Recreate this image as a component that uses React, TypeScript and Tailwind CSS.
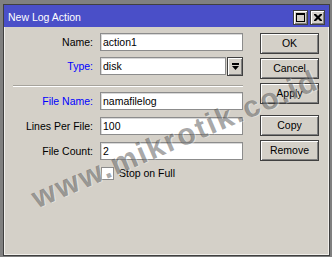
const raised = 'border border-[#404040] bg-[#d4d0c8] shadow-[inset_1px_1px_0_#ffffff,inset_-1px_-1px_0_#808080]'
const field = 'bg-white border border-[#8c8c8c] shadow-[inset_1px_1px_0_#d8d8d8] pl-[2px] flex items-center'

function Row({ label, value, blue }: { label: string; value: string; blue?: boolean }) {
  return (
    <div className="flex items-center h-[18px]">
      <div className={`w-[88px] text-right ${blue ? 'text-[#0000ff]' : 'text-black'}`}>{label}</div>
      <div className={`ml-[7px] w-[143px] h-[18px] ${field}`}>{value}</div>
    </div>
  )
}

function Btn({ label, className = '' }: { label: string; className?: string }) {
  return (
    <div className={`w-[59px] h-[21px] flex items-center justify-center ${raised} ${className}`}>{label}</div>
  )
}

export default function App() {
  return (
    <div className="relative w-[332px] h-[257px] overflow-hidden bg-[#808080] pt-[4px] pl-[3px] font-['Liberation_Sans',Arial,sans-serif] text-[10.5px] leading-none text-black">
      <div className="w-[327px] h-[252px] border border-[#404040] flex flex-col">
        {/* title bar */}
        <div className="h-[22px] bg-[#4a4fc8] flex items-center pl-[4px] pr-[4px]">
          <span className="text-white text-[10.5px] pt-[3px]">New Log Action</span>
          <div className="ml-auto flex gap-[2px] mt-[3px]">
            <div className={`w-[15px] h-[15px] flex items-center justify-center ${raised}`}>
              <svg width="9" height="9" viewBox="0 0 9 9">
                <rect x="0.5" y="0.5" width="8" height="8" fill="none" stroke="#000" />
                <rect x="0" y="0" width="9" height="2" fill="#000" />
              </svg>
            </div>
            <div className={`w-[15px] h-[15px] flex items-center justify-center ${raised}`}>
              <svg width="8" height="7" viewBox="0 0 8 7">
                <path d="M0 0h2l2 2 2-2h2v1L5.5 3.5 8 6v1H6L4 5 2 7H0V6l2.5-2.5L0 1z" fill="#000" />
              </svg>
            </div>
          </div>
        </div>

        {/* body */}
        <div className="flex-1 bg-[#d4d0c8] border border-t-0 border-[#f2f0ec] flex">
          <div className="flex flex-col pt-[6px]">
            <Row label="Name:" value="action1" />
            <div className="flex items-center h-[18px] mt-[6px]">
              <div className="w-[88px] text-right text-[#0000ff]">Type:</div>
              <div className={`ml-[7px] w-[126px] h-[18px] ${field}`}>disk</div>
              <div className={`ml-[1px] w-[16px] h-[19px] flex items-center justify-center ${raised} border-[#9a9a9a]`}>
                <svg width="7" height="7" viewBox="0 0 7 7">
                  <rect x="0" y="0" width="7" height="2" fill="#000" />
                  <path d="M0 3h7L3.5 7z" fill="#000" />
                </svg>
              </div>
            </div>
            <div className="ml-[8px] w-[230px] mt-[10px] border-t border-[#a6a39c] border-b border-b-white" />
            <div className="mt-[5px] flex flex-col gap-[7px]">
              <Row label="File Name:" value="namafilelog" blue />
              <Row label="Lines Per File:" value="100" />
              <Row label="File Count:" value="2" />
            </div>
            <div className="mt-[7px] flex items-center ml-[96px]">
              <div className="w-[13px] h-[13px] bg-white border border-[#8c8c8c]" />
              <span className="ml-[5px]">Stop on Full</span>
            </div>
          </div>

          <div className="ml-[17px] pt-[6px] flex flex-col">
            <Btn label="OK" />
            <Btn label="Cancel" className="mt-[4px]" />
            <Btn label="Apply" className="mt-[4px]" />
            <Btn label="Copy" className="mt-[11px]" />
            <Btn label="Remove" className="mt-[4px]" />
          </div>
        </div>
      </div>

      {/* watermark */}
      <div className="absolute left-[175px] top-[139px] -translate-x-1/2 -translate-y-1/2 -rotate-[23deg] whitespace-nowrap font-['Liberation_Sans',Arial,sans-serif] font-bold text-[30px] tracking-[2px] text-[#3c3c3c]/45 [text-shadow:1px_1px_0_rgba(255,255,255,0.35)]">
        www.mikrotik.co.id
      </div>
    </div>
  )
}
